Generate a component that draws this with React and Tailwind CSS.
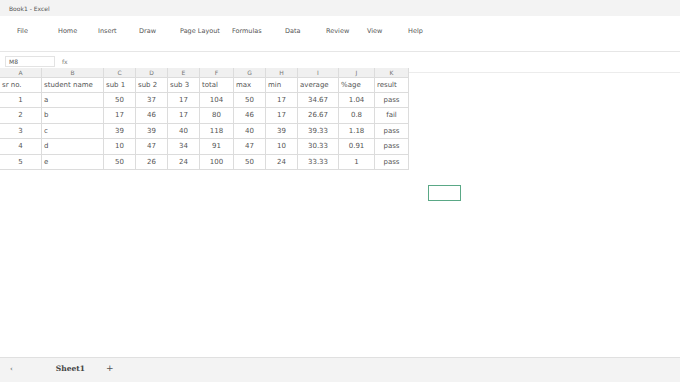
import React from 'react';

const MENU = [
    { label: 'File', x: 17 },
    { label: 'Home', x: 58 },
    { label: 'Insert', x: 98 },
    { label: 'Draw', x: 139 },
    { label: 'Page Layout', x: 180 },
    { label: 'Formulas', x: 232 },
    { label: 'Data', x: 285 },
    { label: 'Review', x: 326 },
    { label: 'View', x: 367 },
    { label: 'Help', x: 408 },
];

const COLS = [
    { id: 'A', w: 41 },
    { id: 'B', w: 62 },
    { id: 'C', w: 32 },
    { id: 'D', w: 32 },
    { id: 'E', w: 32 },
    { id: 'F', w: 34 },
    { id: 'G', w: 32 },
    { id: 'H', w: 32 },
    { id: 'I', w: 41 },
    { id: 'J', w: 36 },
    { id: 'K', w: 34 },
];

const HEAD = ['sr no.', 'student name', 'sub 1', 'sub 2', 'sub 3', 'total', 'max', 'min', 'average', '%age', 'result'];

const ROWS = [
    ['1', 'a', '50', '37', '17', '104', '50', '17', '34.67', '1.04', 'pass'],
    ['2', 'b', '17', '46', '17', '80', '46', '17', '26.67', '0.8', 'fail'],
    ['3', 'c', '39', '39', '40', '118', '40', '39', '39.33', '1.18', 'pass'],
    ['4', 'd', '10', '47', '34', '91', '47', '10', '30.33', '0.91', 'pass'],
    ['5', 'e', '50', '26', '24', '100', '50', '24', '33.33', '1', 'pass'],
];

export default function App() {
    return (
        <div className="w-[680px] h-[382px] bg-white flex flex-col overflow-hidden text-[#555]" style={{ fontFamily: '"DejaVu Sans", sans-serif' }}>
            {/* title bar */}
            <div className="h-[16px] bg-[#f3f3f3] flex items-center pl-[9px] text-[6px] text-[#555]">
                Book1 - Excel
            </div>

            {/* ribbon tabs */}
            <div className="relative h-[36px] border-b border-[#e6e6e6] text-[6.5px] text-[#555]">
                {MENU.map((m) => (
                    <span key={m.label} className="absolute top-[11px]" style={{ left: m.x }}>{m.label}</span>
                ))}
            </div>

            {/* formula bar */}
            <div className="h-[14px] mt-[2px] flex items-center">
                <div className="ml-[5px] w-[50px] h-[11px] border border-[#e3e3e3] flex items-center pl-[3px] text-[6px] text-[#555]">M8</div>
                <span className="ml-[7px] text-[6px] text-[#777]">fx</span>
            </div>

            {/* grid */}
            <div className="relative flex-1">
                <div className="flex items-start">
                    <div className="flex flex-col border-r border-[#dcdcdc]">
                        <div className="flex h-[10px] bg-[#f0f0f0] border-b border-[#dcdcdc]">
                            {COLS.map((c, i) => (
                                <div key={c.id} className={`flex items-center justify-center text-[6px] text-[#777] ${i > 0 ? 'border-l border-[#dcdcdc]' : ''}`} style={{ width: c.w }}>
                                    {c.id}
                                </div>
                            ))}
                        </div>
                        <div className="flex h-[15px] border-b border-[#dcdcdc]">
                            {HEAD.map((h, i) => (
                                <div key={h} className={`flex items-center pl-[2px] text-[7px] ${i > 0 ? 'border-l border-[#dcdcdc]' : ''}`} style={{ width: COLS[i].w }}>
                                    {h}
                                </div>
                            ))}
                        </div>
                        {ROWS.map((r, ri) => (
                            <div key={ri} className="flex h-[15.4px] border-b border-[#dcdcdc]">
                                {r.map((v, i) => (
                                    <div key={i} className={`flex items-center text-[7px] ${i === 1 ? 'pl-[2px]' : 'justify-center'} ${i > 0 ? 'border-l border-[#dcdcdc]' : ''}`} style={{ width: COLS[i].w }}>
                                        {v}
                                    </div>
                                ))}
                            </div>
                        ))}
                    </div>
                    <div className="flex-1 mt-[4px] border-t border-[#ececec]"></div>
                </div>

                {/* active cell */}
                <div className="absolute left-[428px] top-[117px] w-[33px] h-[16px] border-[1.5px] border-[#5aa886]"></div>
            </div>

            {/* sheet tabs */}
            <div className="h-[25px] bg-[#f3f3f3] border-t border-[#e0e0e0] flex items-center pb-[2px] text-[#555]">
                <span className="ml-[10px] text-[7px]">‹</span>
                <span className="ml-[43px] text-[7.5px] font-bold text-[#444]" style={{ fontFamily: '"DejaVu Serif", serif' }}>Sheet1</span>
                <span className="ml-[21px] text-[9px]">+</span>
            </div>
        </div>
    );
}
